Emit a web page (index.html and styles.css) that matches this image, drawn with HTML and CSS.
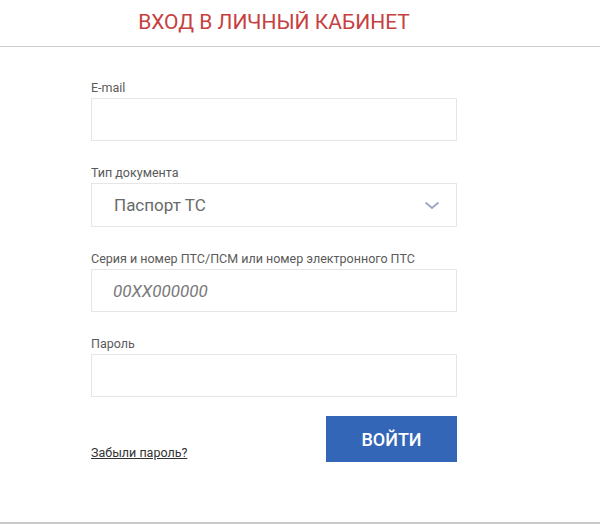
FILE: index.html
```html
<!DOCTYPE html>
<html lang="ru">
<head>
    <meta charset="UTF-8">
    <meta name="viewport" content="width=device-width, initial-scale=1.0">
    <title>Вход в личный кабинет</title>
    <link rel="stylesheet" href="styles.css">
</head>
<body>
    <div class="page">
        <header class="header">
            <h1 class="header-title">ВХОД В ЛИЧНЫЙ КАБИНЕТ</h1>
        </header>

        <form class="login-form" id="loginForm">
            <div class="form-group">
                <label for="email">E-mail</label>
                <input type="email" id="email" name="email">
            </div>

            <div class="form-group">
                <label for="docType">Тип документа</label>
                <div class="select-wrap">
                    <select id="docType" name="docType">
                        <option>Паспорт ТС</option>
                        <option>Электронный ПТС</option>
                    </select>
                    <svg class="select-arrow" width="16" height="9" viewBox="0 0 16 9">
                        <path d="M1.5 1.5 L8 7 L14.5 1.5" fill="none" stroke="#9fa9c6" stroke-width="2"/>
                    </svg>
                </div>
            </div>

            <div class="form-group">
                <label for="docNumber">Серия и номер ПТС/ПСМ или номер электронного ПТС</label>
                <input type="text" id="docNumber" name="docNumber" placeholder="00XX000000">
            </div>

            <div class="form-group">
                <label for="password">Пароль</label>
                <input type="password" id="password" name="password">
            </div>

            <div class="form-actions">
                <a href="#" class="forgot-link">Забыли пароль?</a>
                <button type="submit">ВОЙТИ</button>
            </div>
        </form>
    </div>
</body>
</html>
```

FILE: styles.css
```css
* {
    margin: 0;
    padding: 0;
    box-sizing: border-box;
    font-family: Roboto, "Noto Sans", Arial, sans-serif;
}

body {
    background: #fff;
    color: #555;
}

.page {
    height: 524px;
    border-bottom: 2px solid #c9c9c9;
}

.header {
    height: 47px;
    border-bottom: 1px solid #cdcdd2;
    padding-left: 91px;
}

.header-title {
    width: 366px;
    text-align: center;
    font-size: 21px;
    font-weight: 400;
    line-height: 45px;
    color: #c64040;
}

.login-form {
    width: 366px;
    margin-left: 91px;
    padding-top: 33px;
}

.form-group {
    margin-bottom: 24px;
}

label {
    display: block;
    font-size: 12.5px;
    line-height: 16px;
    margin-bottom: 2px;
    color: #5a5a5a;
}

input,
select {
    display: block;
    width: 100%;
    height: 43px;
    border: 1px solid #e6e6e6;
    background: #fff;
    padding: 0 21px;
    font-size: 17px;
    color: #6a6a6a;
    outline: none;
}

input::placeholder {
    font-style: italic;
    color: #7a7a7a;
}

.select-wrap {
    position: relative;
}

select {
    appearance: none;
    -webkit-appearance: none;
    height: 44px;
    padding-left: 22px;
}

.select-arrow {
    position: absolute;
    right: 17px;
    top: 18px;
    pointer-events: none;
}

.form-actions {
    display: flex;
    justify-content: space-between;
    align-items: flex-end;
    margin-top: -5px;
}

.forgot-link {
    font-size: 12.5px;
    color: #333;
    padding-bottom: 2px;
}

button {
    width: 131px;
    height: 46px;
    background: #3466b7;
    color: #fff;
    border: none;
    font-size: 18px;
    font-weight: 500;
    cursor: pointer;
}

button:hover {
    background: #2b58a3;
}
```
